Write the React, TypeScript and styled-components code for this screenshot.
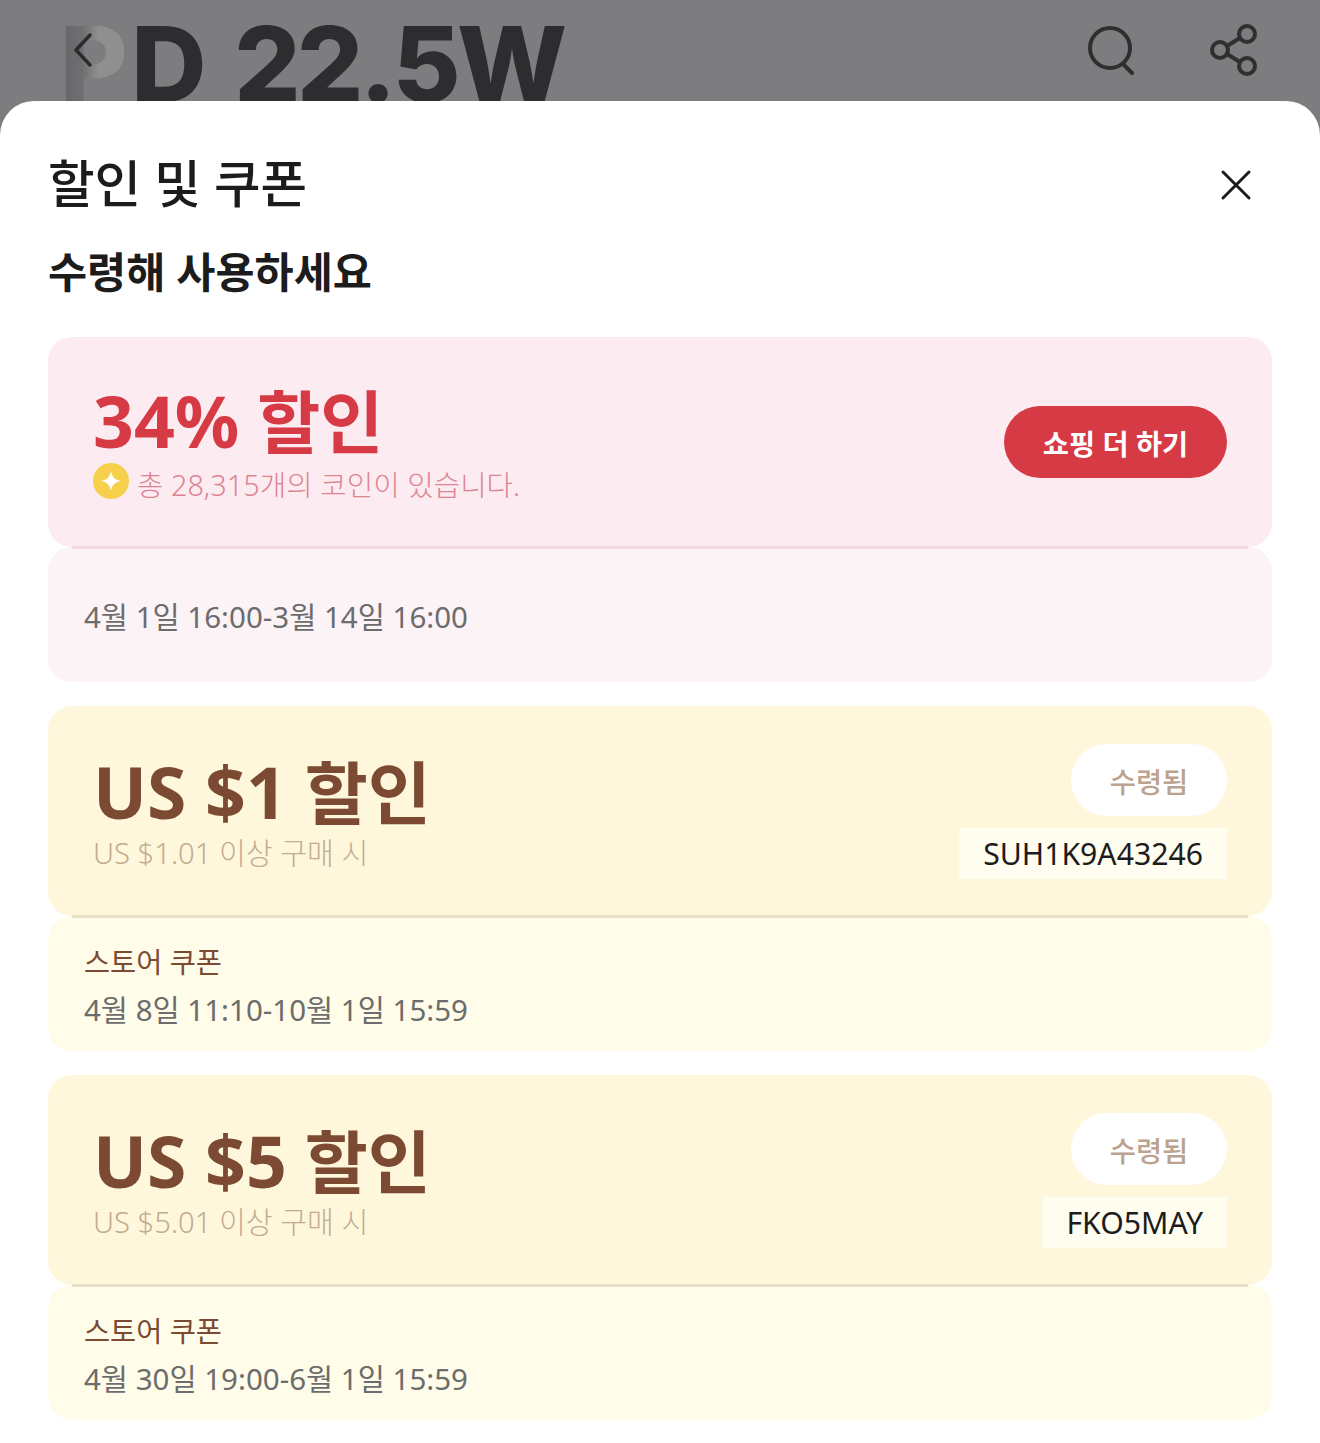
import React from "react";
import styled, { createGlobalStyle } from "styled-components";

const GlobalStyle = createGlobalStyle`
  html, body {
    margin: 0;
    padding: 0;
    background: #fff;
  }
  * {
    box-sizing: border-box;
  }
`;

const Page = styled.div`
  width: 1320px;
  height: 1443px;
  overflow: hidden;
  background: #7d7d7f;
  font-family: "Noto Sans", "Noto Sans CJK KR", sans-serif;
`;

const Backdrop = styled.header`
  position: relative;
  height: 130px;
  margin-bottom: -29px;
  padding: 0 60px 0 60px;
  display: flex;
  justify-content: space-between;
  align-items: flex-start;
  overflow: hidden;
`;

const BannerText = styled.div`
  font-family: "Inter", sans-serif;
  font-size: 104px;
  font-weight: 800;
  line-height: 1;
  letter-spacing: -3.5px;
  word-spacing: 12px;
  margin-top: 12px;
  color: #2d2d30;
  white-space: nowrap;
  filter: blur(0.7px);

  & > span {
    margin-right: 7px;
    color: transparent;
    background: linear-gradient(90deg, #666668 0%, #6f6f71 35%, #8f8f90 60%);
    background-clip: text;
    -webkit-background-clip: text;
  }
`;

const BackButton = styled.svg`
  position: absolute;
  left: 72px;
  top: 32px;
`;

const HeaderIcons = styled.div`
  display: flex;
  align-items: center;
  gap: 73px;
  margin-top: 24px;
  filter: blur(0.4px);
`;

const Sheet = styled.section`
  position: relative;
  height: 1342px;
  background: #fff;
  border-radius: 34px 34px 0 0;
  padding: 0 48px;
`;

const TitleRow = styled.div`
  display: flex;
  justify-content: space-between;
  align-items: center;
  height: 166px;
  padding: 0 20px 0 0;
  margin-bottom: -20px;
`;

const CloseIcon = styled.svg`
  margin-top: 2px;
`;

const Title = styled.h1`
  margin: 0;
  font-size: 50.6px;
  font-weight: 500;
  line-height: 60px;
  color: #1c1c1c;
`;

const SubTitle = styled.h2`
  margin: 0 0 40px;
  font-size: 42.5px;
  font-weight: 700;
  line-height: 50px;
  color: #1c1c1c;
`;

const CouponList = styled.div`
  display: flex;
  flex-direction: column;
  gap: 24px;
`;

const Coupon = styled.article``;

const CouponTop = styled.div<{ $bg: string; $line: string }>`
  position: relative;
  height: 210px;
  padding: 0 45px;
  display: flex;
  justify-content: space-between;
  align-items: flex-start;
  background: ${(p) => p.$bg};
  border-radius: 24px;

  &::after {
    content: "";
    position: absolute;
    left: 24px;
    right: 24px;
    bottom: -2px;
    height: 3px;
    background: ${(p) => p.$line};
  }
`;

const CouponBottom = styled.div<{ $bg: string }>`
  height: 135px;
  padding: 22px 36px 0;
  display: flex;
  flex-direction: column;
  background: ${(p) => p.$bg};
  border-radius: 24px;
`;

const Amount = styled.div<{ $color: string; $top: number }>`
  margin-top: ${(p) => p.$top}px;
  font-size: 71.5px;
  font-weight: 700;
  line-height: 84px;
  color: ${(p) => p.$color};
  white-space: nowrap;
`;

const AmountUnit = styled.span`
  margin-left: 18px;
  font-size: 68.5px;
`;

const Condition = styled.div<{ $color: string; $top?: number }>`
  display: flex;
  align-items: center;
  gap: 8px;
  margin-top: ${(p) => p.$top ?? 0}px;
  font-size: 29.2px;
  line-height: 40px;
  font-weight: 300;
  color: ${(p) => p.$color};
  white-space: nowrap;
`;

const CoinText = styled.span`
  font-size: 28.8px;
`;

const CoinSvg = styled.svg`
  transform: translateY(-4px);
`;

const LeftCol = styled.div`
  display: flex;
  flex-direction: column;
`;

const RightCol = styled.div<{ $top: number }>`
  display: flex;
  flex-direction: column;
  align-items: flex-end;
  gap: 12px;
  margin-top: ${(p) => p.$top}px;
`;

const ShopButton = styled.button`
  width: 223px;
  height: 72px;
  border: none;
  border-radius: 36px;
  background: #d63a44;
  color: #fff;
  font-family: inherit;
  font-size: 28.4px;
  font-weight: 700;
`;

const ClaimedPill = styled.div`
  width: 156px;
  height: 72px;
  border-radius: 36px;
  background: #fff;
  color: #bca38f;
  font-size: 28.5px;
  font-weight: 500;
  display: flex;
  align-items: center;
  justify-content: center;
`;

const CodeBox = styled.div`
  height: 51px;
  padding: 0 24px;
  background: #fffcf0;
  color: #1c1c1c;
  font-size: 30.2px;
  font-weight: 400;
  line-height: 51px;
`;

const StoreLabel = styled.div`
  font-size: 28.4px;
  line-height: 48px;
  font-weight: 400;
  color: #7c4a32;
`;

const Period = styled.div<{ $top?: number }>`
  margin-top: ${(p) => p.$top ?? 0}px;
  font-size: 29.5px;
  line-height: 48px;
  font-weight: 400;
  color: #6c6c6c;
  white-space: nowrap;
`;

const PINK = {
  top: "#fcecf1",
  bottom: "#fcf3f7",
  line: "#f6d9e3",
};

const YELLOW = {
  top: "#fef7dc",
  bottom: "#fffce9",
  line: "#e9e0c8",
};

const storeCoupons = [
  {
    amount: "US $1",
    condition: "US $1.01 이상 구매 시",
    code: "SUH1K9A43246",
    period: "4월 8일 11:10-10월 1일 15:59",
  },
  {
    amount: "US $5",
    condition: "US $5.01 이상 구매 시",
    code: "FKO5MAY",
    period: "4월 30일 19:00-6월 1일 15:59",
  },
];

const CoinIcon = () => (
  <CoinSvg width="36" height="36" viewBox="0 0 36 36">
    <circle cx="18" cy="18" r="18" fill="#f6d04b" />
    <path d="M18 8c1 6 4 9 10 10-6 1-9 4-10 10-1-6-4-9-10-10 6-1 9-4 10-10z" fill="#fff" />
  </CoinSvg>
);

const App = () => {
  return (
    <Page>
      <GlobalStyle />
      <Backdrop>
        <BannerText>
          <span>P</span>D 22.5W
        </BannerText>
        <BackButton width="24" height="36" viewBox="0 0 24 36" fill="none">
          <path d="M18 3 4 18l14 15" stroke="#2b2b2e" strokeWidth="3.5" strokeLinecap="round" strokeLinejoin="round" />
        </BackButton>
        <HeaderIcons>
          <svg width="50" height="52" viewBox="0 0 50 52" fill="none" stroke="#2f2f31" strokeWidth="4" strokeLinecap="round">
            <circle cx="23" cy="24" r="20" />
            <path d="m36 40 9 9" />
          </svg>
          <svg width="50" height="52" viewBox="0 0 50 52" fill="none" stroke="#2f2f31" strokeWidth="4">
            <circle cx="10" cy="26" r="8" />
            <circle cx="37" cy="10" r="8" />
            <circle cx="37" cy="42" r="8" />
            <path d="m17 22 13-8M17 30l13 8" />
          </svg>
        </HeaderIcons>
      </Backdrop>
      <Sheet>
        <TitleRow>
          <Title>할인 및 쿠폰</Title>
          <CloseIcon width="32" height="32" viewBox="0 0 32 32" fill="none" stroke="#1c1c1c" strokeWidth="3" strokeLinecap="round">
            <path d="M3 3l26 26M29 3 3 29" />
          </CloseIcon>
        </TitleRow>
        <SubTitle>수령해 사용하세요</SubTitle>
        <CouponList>
          <Coupon>
            <CouponTop $bg={PINK.top} $line={PINK.line}>
              <LeftCol>
                <Amount $color="#d63a44" $top={42}>
                  34%
                  <AmountUnit>할인</AmountUnit>
                </Amount>
                <Condition $color="#dd8493" $top={1}>
                  <CoinIcon />
                  <CoinText>총 28,315개의 코인이 있습니다.</CoinText>
                </Condition>
              </LeftCol>
              <RightCol $top={69}>
                <ShopButton>쇼핑 더 하기</ShopButton>
              </RightCol>
            </CouponTop>
            <CouponBottom $bg={PINK.bottom}>
              <Period $top={24}>4월 1일 16:00-3월 14일 16:00</Period>
            </CouponBottom>
          </Coupon>
          {storeCoupons.map((c) => (
            <Coupon key={c.code}>
              <CouponTop $bg={YELLOW.top} $line={YELLOW.line}>
                <LeftCol>
                  <Amount $color="#7c4a32" $top={44}>
                    {c.amount}
                    <AmountUnit>할인</AmountUnit>
                  </Amount>
                  <Condition $color="#c4ab8e" $top={-2}>
                    {c.condition}
                  </Condition>
                </LeftCol>
                <RightCol $top={38}>
                  <ClaimedPill>수령됨</ClaimedPill>
                  <CodeBox>{c.code}</CodeBox>
                </RightCol>
              </CouponTop>
              <CouponBottom $bg={YELLOW.bottom}>
                <StoreLabel>스토어 쿠폰</StoreLabel>
                <Period>{c.period}</Period>
              </CouponBottom>
            </Coupon>
          ))}
        </CouponList>
      </Sheet>
    </Page>
  );
};

export default App;
